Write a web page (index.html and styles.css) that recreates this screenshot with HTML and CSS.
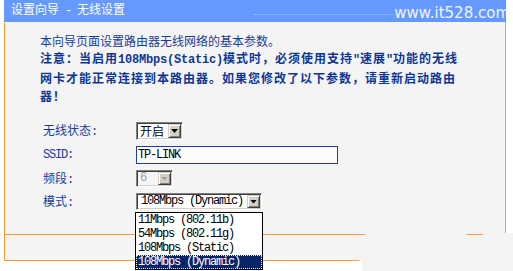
FILE: index.html
```html
<!DOCTYPE html>
<html lang="zh-CN">
<head>
<meta charset="utf-8">
<title>设置向导 - 无线设置</title>
<link rel="stylesheet" href="styles.css">
</head>
<body>
<div class="page">
  <div class="header">
    <span class="title">设置向导<span class="m"> - </span>无线设置</span>
    <span class="dots"></span>
    <span class="wm">www.it528.com</span>
  </div>
  <div class="content">
    <p class="intro">本向导页面设置路由器无线网络的基本参数。</p>
    <p class="note">注意：当启用<span class="m">108Mbps(Static)</span>模式时，必须使用支持<span class="m">"</span>速展<span class="m">"</span>功能的无线网卡才能正常连接到本路由器。如果您修改了以下参数，请重新启动路由器！</p>
    <div class="form">
      <div class="row r1">
        <span class="label">无线状态<span class="m">:</span></span>
        <div class="sel s1"><span class="val">开启</span><span class="btn"><i class="tri"></i></span></div>
      </div>
      <div class="row r2">
        <span class="label m lbl-m">SSID:</span>
        <input class="inp m" type="text" value="TP-LINK">
      </div>
      <div class="row r3">
        <span class="label">频段<span class="m">:</span></span>
        <div class="sel s3 off"><span class="val m">6</span><span class="btn"><i class="tri"></i></span></div>
      </div>
      <div class="row r4">
        <span class="label">模式<span class="m">:</span></span>
        <div class="sel s4"><span class="val m">108Mbps (Dynamic)</span><span class="btn"><i class="tri"></i></span>
          <ul class="list"><li class="m">11Mbps (802.11b)</li><li class="m">54Mbps (802.11g)</li><li class="m">108Mbps (Static)</li><li class="m on">108Mbps (Dynamic)</li></ul>
        </div>
      </div>
    </div>
  </div>
  <div class="footer"></div>
</div>
<div class="patch"></div>
</body>
</html>
```
FILE: styles.css
```css
html, body {
  margin: 0;
  padding: 0;
}
body {
  position: relative;
  width: 513px;
  height: 271px;
  overflow: hidden;
  background: #ffffff;
  font-family: "Noto Sans CJK SC", sans-serif;
  font-size: 12px;
}
.m {
  font-family: "Liberation Mono", "Noto Sans CJK SC", monospace;
  font-size: 12px;
  letter-spacing: -1.2px;
  white-space: pre;
}
.page {
  margin-left: 4px;
  width: 502px;
}
.header {
  display: flex;
  align-items: flex-start;
  height: 22px;
  background: #6699ff;
  overflow: hidden;
}
.title {
  padding-left: 7px;
  color: #ffffff;
  line-height: 18px;
  white-space: nowrap;
}
.dots {
  margin-left: auto;
  margin-top: 14px;
  width: 140px;
  border-top: 1px dotted #9dbdff;
}
.wm {
  flex: none;
  margin-right: -4px;
  padding-top: 6px;
  font-family: "DejaVu Sans", sans-serif;
  font-size: 15px;
  line-height: 15px;
  color: #eef4ff;
}
.content {
  box-sizing: border-box;
  height: 213px;
  padding: 10px 0 0 35px;
  background: #f4f4f4;
  border-left: 1px solid #f39b3d;
  border-right: 1px solid #f39b3d;
  border-bottom: 1px solid #f39b3d;
}
.intro {
  margin: 0;
  line-height: 17px;
  color: #193c97;
}
.note {
  margin: 0;
  width: 424px;
  line-height: 18px;
  font-weight: bold;
  letter-spacing: 1px;
  color: #0d3795;
}
.note .m {
  font-weight: bold;
  letter-spacing: -0.2px;
}
.form {
  margin: 14px 0 0 3px;
}
.row {
  display: flex;
  align-items: center;
  height: 24px;
}
.row.r3, .row.r4 {
  height: 23px;
}
.label {
  flex: none;
  width: 93px;
  line-height: 18px;
  color: #193c97;
}
.sel {
  box-sizing: border-box;
  display: flex;
  padding: 1px;
  border: 1px solid;
  border-color: #808080 #ffffff #ffffff #808080;
  box-shadow: inset 1px 1px #404040, inset -1px -1px #d4d0c8;
  background: #ffffff;
  color: #000000;
}
.s1 { width: 47px; height: 18px; }
.s3 { width: 37px; height: 17px; }
.s4 { width: 126px; height: 17px; position: relative; }
.val {
  flex: 1;
  padding-left: 2px;
  line-height: 14px;
  overflow: hidden;
  white-space: nowrap;
}
.s3 .val, .s4 .val { line-height: 13px; }
.s4 .val { padding-left: 3px; }
.btn {
  flex: none;
  box-sizing: border-box;
  width: 13px;
  display: flex;
  align-items: center;
  justify-content: center;
  background: #d4d0c8;
  border: 1px solid;
  border-color: #d4d0c8 #404040 #404040 #d4d0c8;
  box-shadow: inset 1px 1px #ffffff, inset -1px -1px #808080;
}
.tri {
  display: block;
  width: 7px;
  height: 4px;
  background: #000000;
  clip-path: polygon(0 0, 100% 0, 50% 100%);
}
.off { background: #f6f6f6; }
.off .val { color: #a0a0a0; }
.off .tri { background: #a0a0a0; }
.inp {
  box-sizing: border-box;
  width: 202px;
  height: 18px;
  margin: 0;
  padding: 0 0 0 1px;
  border: 1px solid #1f3ea0;
  background: #fcfdfb;
  color: #000000;
  outline: none;
}
.list {
  position: absolute;
  left: -2px;
  top: calc(100% + 3px);
  box-sizing: border-box;
  width: 128px;
  margin: 0;
  padding: 0;
  list-style: none;
  border: 1px solid #000000;
  background: #ffffff;
  color: #000000;
}
.list li {
  display: block;
  height: 14px;
  line-height: 14px;
  padding-left: 2px;
}
.list li.on {
  background: #0a246a;
  color: #ffffff;
  outline: 1px dotted #fff6a8;
  outline-offset: -1px;
}
.footer {
  box-sizing: border-box;
  height: 26px;
  background: #f4f4f4;
  border-left: 1px solid #f39b3d;
  border-bottom: 1px solid #f39b3d;
}
.patch {
  position: absolute;
  left: 356px;
  top: 228px;
  width: 157px;
  height: 43px;
  background: #f3f3f1;
  clip-path: polygon(9px 6px, 111px 6px, 111px 7px, 127px 7px, 127px 5px, 157px 5px, 157px 43px, 7px 43px, 6px 35px, 2px 31px, 5px 20px);
}
```
